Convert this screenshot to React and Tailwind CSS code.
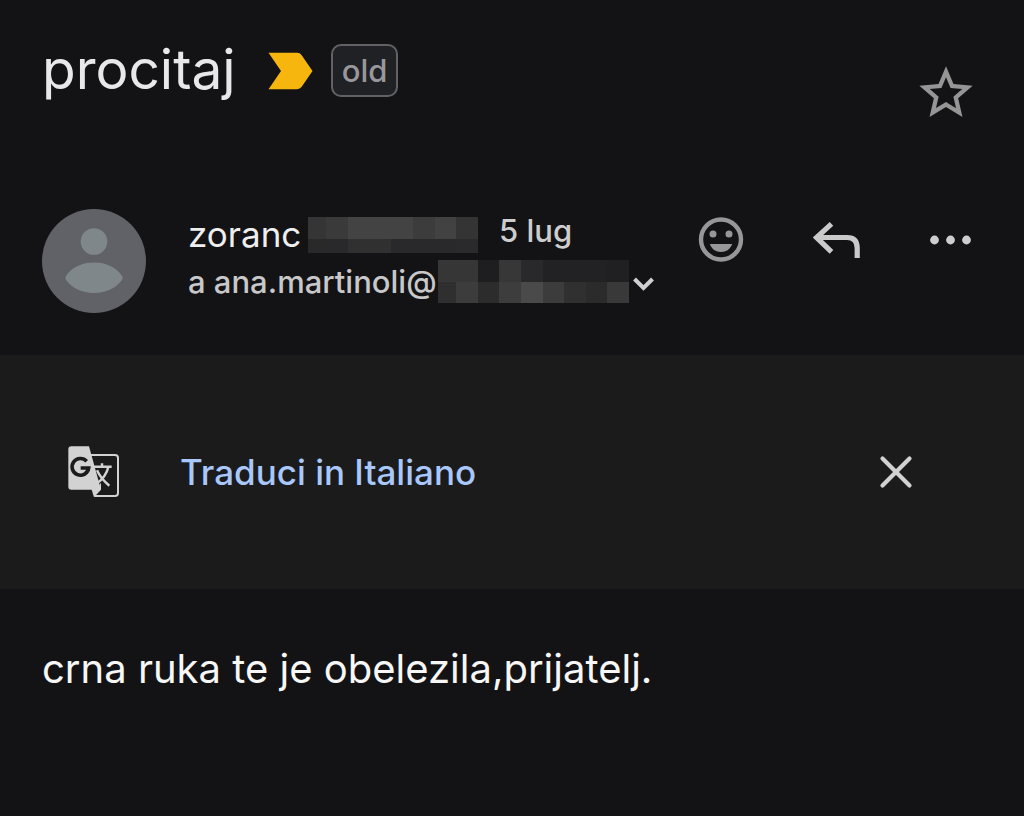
import React from "react";

function Mosaic({ rows, className }) {
  return (
    <span aria-hidden="true" className={`flex shrink-0 flex-col ${className}`}>
      {rows.map((cells, r) => (
        <span key={r} className={r === 0 ? "flex h-[22px]" : "flex flex-1"}>
          {cells.map((c, i) => (
            <span
              key={i}
              className={i === 0 ? "w-[18px]" : "flex-1"}
              style={{ backgroundColor: c }}
            />
          ))}
        </span>
      ))}
    </span>
  );
}

const nameMosaic = [
  ["#353536", "#3a3a3b", "#434344", "#434344", "#434344", "#3c3c3d", "#424243", "#343435"],
  ["#29292a", "#29292b", "#303031", "#303031", "#29292b", "#29292b", "#29292b", "#2a2a2c"],
];

const domainMosaic = [
  ["#363637", "#363637", "#1e1e20", "#373738", "#29292b", "#222224", "#222224", "#222224", "#202022"],
  ["#2f2f30", "#3c3c3d", "#2c2c2d", "#3d3d3e", "#4a4a4b", "#3c3c3d", "#303031", "#2b2b2c", "#39393a"],
];

export default function App() {
  return (
    <main className="min-h-screen bg-[#131315] font-['Inter','Liberation_Sans',sans-serif] text-[#e8e8ea]">
      <header className="flex h-[355px] flex-col pt-11 pr-[46px] pl-[42px]">
        <div className="flex items-start justify-between">
          <div className="flex items-start">
            <h1 className="text-[55px] leading-[50px]">procitaj</h1>
            <svg className="mt-2 ml-8 h-[38px] w-[45px]" viewBox="0 0 45 38" fill="#f6b60d" aria-hidden="true">
              <path d="M0.5 0.8H29Q32 0.8 33.7 3.2L44.5 19L33.7 34.8Q32 37.2 29 37.2H0.5L13 19Z" />
            </svg>
            <span className="ml-[18px] rounded-[10px] border-2 border-[#626266] bg-[#202125] px-[9px] text-[31px] leading-[49px] font-medium text-[#98989c]">
              old
            </span>
          </div>
          <button type="button" aria-label="Aggiungi a speciali" className="mt-[17px]">
            <svg className="size-16" viewBox="0 0 24 24" fill="#959595">
              <path d="M22 9.24l-7.19-.62L12 2 9.19 8.63 2 9.24l5.46 4.73L5.82 21 12 17.27 18.18 21l-1.63-7.03L22 9.24zM12 15.4l-3.76 2.27 1-4.28-3.32-2.88 4.38-.38L12 6.1l1.71 4.04 4.38.38-3.32 2.88 1 4.28L12 15.4z" />
            </svg>
          </button>
        </div>

        <div className="mt-[84px] flex items-start pr-[6px]">
          <svg className="size-[104px] shrink-0" viewBox="0 0 104 104" role="img" aria-label="zoranc">
            <circle cx="52" cy="52" r="52" fill="#606267" />
            <circle cx="52" cy="32.5" r="13.3" fill="#80878a" />
            <path d="M24 67C30 58 40 53.5 52 53.5S74 58 80 67Q81.500 69 80 71C74 79 64 84 52 84S30 79 24 71Q22.500 69 24 67Z" fill="#80878a" />
          </svg>
          <div className="ml-[42px]">
            <div className="flex h-[50px] items-start">
              <span className="w-[120px] text-[35px] leading-[50px] text-[#eeeeef]">zoranc</span>
              <Mosaic rows={nameMosaic} className="mt-2 h-9 w-[170px]" />
              <time className="ml-[21px] text-[31px] leading-[44px] font-medium whitespace-nowrap text-[#cdcdcf]">5 lug</time>
            </div>
            <div className="flex h-11 items-start">
              <span className="w-[250px] text-[31px] leading-[46px] font-medium whitespace-nowrap text-[#c8c8ca]">
                a ana.martinoli@
              </span>
              <Mosaic rows={domainMosaic} className="mt-[1px] h-[43px] w-[191px]" />
              <button type="button" aria-label="Mostra dettagli" className="mt-[18px] ml-1">
                <svg className="h-[15px] w-[21px]" viewBox="0 0 21 15" fill="none" stroke="#cfcfd1" strokeWidth="4">
                  <path d="M1.5 2L10.5 11L19.5 2" />
                </svg>
              </button>
            </div>
          </div>
          <div className="mt-2 ml-auto flex items-center gap-[69px]">
            <button type="button" aria-label="Aggiungi reazione">
              <svg className="size-[46px]" viewBox="0 0 46 46" fill="#979797">
                <circle cx="23" cy="22.5" r="20" fill="none" stroke="#979797" strokeWidth="4.4" />
                <circle cx="15" cy="17" r="3.5" />
                <circle cx="31" cy="17" r="3.5" />
                <path d="M11.8 27H34.2C32.5 32 28.2 35 23 35S13.500 32 11.8 27Z" />
              </svg>
            </button>
            <button type="button" aria-label="Rispondi">
              <svg className="h-[46px] w-12" viewBox="0 0 48 46" fill="none" stroke="#cacaca" strokeWidth="5.2">
                <path d="M18.5 6.800L3.500 20.500L18.500 34.800M3.500 20.500H34Q44.2 20.500 44.2 31V41" />
              </svg>
            </button>
            <button type="button" aria-label="Altro">
              <svg className="h-[46px] w-[42px]" viewBox="0 0 42 46" fill="#cdcdcd">
                <circle cx="4.5" cy="23" r="4.4" />
                <circle cx="20.5" cy="23" r="4.4" />
                <circle cx="36.5" cy="23" r="4.4" />
              </svg>
            </button>
          </div>
        </div>
      </header>

      <section className="flex h-[234px] items-center bg-[#1b1b1b] pr-[111px] pl-[68px]">
        <svg className="size-[52px] shrink-0" viewBox="0 0 156 156" fill="none" aria-hidden="true">
          <path d="M69 27H141Q150 27 150 36V141Q150 150 141 150H79" stroke="#d2d2d2" strokeWidth="6" />
          <path d="M10 1H63L99 131L78 154L71 131H10Q1 131 1 122V10Q1 1 10 1Z" fill="#d2d2d2" />
          <path d="M56 46A25 25 0 1 0 62 66H38" stroke="#1b1b1b" strokeWidth="11" />
          <path d="M77 62H131M102 52V62M121 63Q114 94 84 114M87 73Q99 99 124 119" stroke="#d2d2d2" strokeWidth="7.5" />
          <path d="M99 110L87 128L99 131Z" fill="#d2d2d2" />
        </svg>
        <button type="button" className="ml-[60px] text-[35px] leading-[46px] font-medium text-[#a9c7fb]">
          Traduci in Italiano
        </button>
        <button type="button" aria-label="Chiudi" className="ml-auto">
          <svg className="size-[34px]" viewBox="0 0 34 34" stroke="#d2d2d2" strokeWidth="4.2" strokeLinecap="round">
            <path d="M3.5 3.5L30.5 30.500M30.500 3.500L3.500 30.500" />
          </svg>
        </button>
      </section>

      <p className="px-[42px] pt-[53px] text-[40px] leading-[54px] text-[#f7f7f7]">
        crna ruka te je obelezila,prijatelj.
      </p>
    </main>
  );
}
